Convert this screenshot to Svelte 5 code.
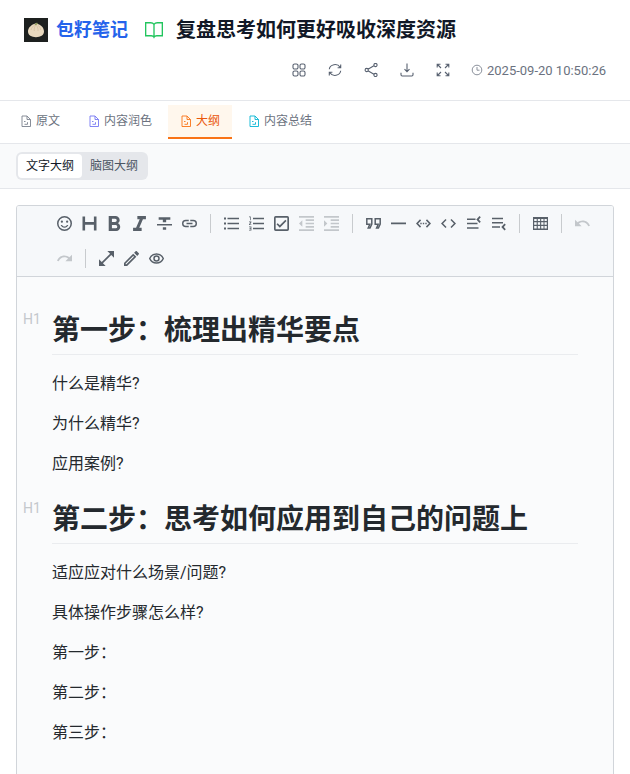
<script>
    let activeTab = 'outline';
    let activeView = 'text';

    const tabs = [
        { id: 'source', label: '原文', color: 'gray' },
        { id: 'polish', label: '内容润色', color: 'indigo' },
        { id: 'outline', label: '大纲', color: 'orange' },
        { id: 'summary', label: '内容总结', color: 'cyan' }
    ];

    const views = [
        { id: 'text', label: '文字大纲' },
        { id: 'mind', label: '脑图大纲' }
    ];

    const actions = [
        {
            name: '应用',
            path: 'M2.600 1h1.800a1.600 1.600 0 0 1 1.600 1.600v1.800a1.600 1.600 0 0 1-1.600 1.600H2.600A1.600 1.600 0 0 1 1 4.400V2.600A1.600 1.600 0 0 1 2.600 1zM9.600 1h1.800a1.600 1.600 0 0 1 1.600 1.600v1.800a1.600 1.600 0 0 1-1.600 1.600H9.600A1.600 1.600 0 0 1 8 4.400V2.600A1.600 1.600 0 0 1 9.600 1zM2.600 8h1.800A1.600 1.600 0 0 1 6 9.600v1.800A1.600 1.600 0 0 1 4.400 13H2.600A1.600 1.600 0 0 1 1 11.400V9.600A1.600 1.600 0 0 1 2.600 8zM9.600 8h1.800A1.600 1.600 0 0 1 13 9.600v1.800a1.600 1.600 0 0 1-1.600 1.600H9.600A1.600 1.600 0 0 1 8 11.400V9.600A1.600 1.600 0 0 1 9.600 8z'
        },
        {
            name: '刷新',
            path: 'M1.3 6.2a5.8 5.2 0 0 1 10.8-2M12.7 1.5v3.2H9.6M12.7 7.8a5.8 5.2 0 0 1-10.8 2M1.3 12.5V9.3h3.1'
        },
        {
            name: '分享',
            path: 'M4 6.300l5.900-3.500M4 7.700l5.900 3.500M4.300 7a1.600 1.600 0 1 1-3.200 0 1.600 1.600 0 0 1 3.200 0zM13.100 2a1.600 1.600 0 1 1-3.200 0 1.600 1.600 0 0 1 3.200 0zM13.100 12a1.600 1.600 0 1 1-3.200 0 1.600 1.600 0 0 1 3.200 0z'
        },
        {
            name: '下载',
            path: 'M7 .5v8M4.500 6.200L7 8.700l2.500-2.500M1 9.800v2q0 1.200 1.200 1.200h9.600q1.200 0 1.200-1.200v-2'
        },
        {
            name: '全屏',
            path: 'M1.200 4.500V1.200h3.300M1.500 1.500l3.500 3.500M9.500 1.200h3.300v3.300M12.500 1.500L9 5M1.200 9.500v3.300h3.300M1.500 12.500L5 9M9.500 12.800h3.300V9.500M12.500 12.500L9 9'
        }
    ];

    const tools = [
        { name: '表情', box: '2 2 20 20', path: 'M12 2a10 10 0 1 0 0 20 10 10 0 0 0 0-20zm0 18a8 8 0 1 1 0-16 8 8 0 0 1 0 16zm3.500-9a1.500 1.500 0 1 0 0-3 1.500 1.500 0 0 0 0 3zm-7 0a1.500 1.500 0 1 0 0-3 1.500 1.500 0 0 0 0 3zM12 16c-1.480 0-2.750-.81-3.450-2H6.880c.8 2.050 2.790 3.500 5.120 3.500s4.320-1.450 5.120-3.500h-1.670c-.7 1.190-1.970 2-3.450 2z' },
        { name: '标题', box: '0 0 15 15', path: 'M.5.5h2.600v5.600h8.800V.5h2.600v14h-2.600V8.700H3.100v5.800H.5z' },
        { name: '粗体', box: '5.4 4 14 14', path: 'M15.600 10.790c.97-.67 1.650-1.770 1.650-2.790 0-2.260-1.750-4-4-4H7v14h7.040c2.090 0 3.710-1.700 3.710-3.790 0-1.520-.86-2.820-2.150-3.420zM10 6.500h3a1.500 1.500 0 0 1 0 3h-3zm3.500 9H10v-3h3.500a1.500 1.500 0 0 1 0 3z' },
        { name: '斜体', box: '5 4 14 14', path: 'M10 4v3h2.210l-3.420 8H6v3h8v-3h-2.210l3.420-8H18V4z' },
        { name: '删除线', box: '3 2.5 18 18', path: 'M10 19h4v-3h-4zM5 4v3h5v3h4V7h5V4zM3 14h18v-2H3z' },
        { name: '链接', box: '2 2 20 20', path: 'M3.900 12A3.100 3.100 0 0 1 7 8.900h4V7H7a5 5 0 0 0 0 10h4v-1.900H7A3.100 3.100 0 0 1 3.900 12zM8 13h8v-2H8zm9-6h-4v1.900h4a3.100 3.100 0 0 1 0 6.200h-4V17h4a5 5 0 0 0 0-10z' },
        { divider: true },
        { name: '无序列表', box: '0 0 15 15', path: 'M0 1.500h2v2H0zM3.500 1.800H15v1.400H3.500zM0 6.500h2v2H0zM3.500 6.800H15v1.400H3.500zM0 11.500h2v2H0zM3.500 11.800H15v1.400H3.500z' },
        { name: '有序列表', box: '0 0 15 15', path: 'M0 .5h1.700v3.700H1V1.200H0zM0 5.500h2.400v.8L1 8.400h1.400v.7H0v-.7l1.400-2.200H0zM0 10.600h2.400v3.900H0v-.7h1.600v-.9H.5v-.7h1.100v-.9H0zM4 1.800h11v1.400H4zM4 6.800h11v1.400H4zM4 11.800h11v1.400H4z' },
        { name: '任务列表', box: '3 3 18 18', path: 'M19 3H5a2 2 0 0 0-2 2v14a2 2 0 0 0 2 2h14a2 2 0 0 0 2-2V5a2 2 0 0 0-2-2zm0 16H5V5h14zM17.990 9l-1.410-1.420-6.590 6.590-2.580-2.570-1.420 1.410 4 3.990z' },
        { name: '减少缩进', box: '3 3 18 18', disabled: true, path: 'M11 17h10v-2H11zM3 12l4 4V8zM3 21h18v-2H3zM3 3v2h18V3zM11 9h10V7H11zM11 13h10v-2H11z' },
        { name: '增加缩进', box: '3 3 18 18', disabled: true, path: 'M3 21h18v-2H3zM3 8v8l4-4zM11 17h10v-2H11zM3 3v2h18V3zM11 9h10V7H11zM11 13h10v-2H11z' },
        { divider: true },
        { name: '引用', box: '0 0 15 15', stroke: true, path: 'M.8 2.800h5v5.200L4 12H2.200l1.600-3.800H.8zM9.200 2.800h5v5.200L12.400 12h-1.800l1.600-3.800H9.200z' },
        { name: '分隔线', box: '0 0 15 15', path: 'M0 6.500h15v1.800H0z' },
        { name: '代码块', box: '0 0 15 15', path: 'M4 3.300l1.100 1.100-3 3.100 3 3.100L4 11.700 0 7.500zM11 3.300L9.900 4.400l3 3.100-3 3.100 1.100 1.100 4-4.200zM4.300 6.800h1.400v1.400H4.300zM6.800 6.800h1.400v1.400H6.800zM9.300 6.800h1.400v1.400H9.300z' },
        { name: '行内代码', box: '2 2 20 20', path: 'M9.400 16.600L4.800 12l4.600-4.600L8 6l-6 6 6 6zM14.600 16.600l4.600-4.600-4.600-4.600L16 6l6 6-6 6z' },
        { name: '前插入', box: '0 0 15 15', path: 'M1 2.500h8.500v1.500H1zM1 6.800h10.500v1.500H1zM1 11.200h11.500v1.500H1zM13.500 0l1.300 1.200-2 2.300 2 2.300L13.500 7l-3.200-3.500z' },
        { name: '后插入', box: '0 0 15 15', path: 'M1 1.800h11v1.500H1zM1 5.900h11v1.500H1zM1 10.200h8v1.500H1zM13.500 7.500l1.300 1.200-2 2.300 2 2.300-1.300 1.200-3.200-3.500z' },
        { divider: true },
        { name: '表格', box: '0 0 15 15', path: 'M0 1h15v13H0zM1.200 3v2.100h2.500V3zM4.800 3v2.100h2.300V3zM8.200 3v2.100h2.300V3zM11.500 3v2.100h2.300V3zM1.200 6.300v2.500h2.500V6.300zM4.800 6.300v2.500h2.300V6.300zM8.200 6.300v2.500h2.300V6.300zM11.500 6.300v2.500h2.300V6.300zM1.200 10v2.600h2.500V10zM4.800 10v2.600h2.300V10zM8.200 10v2.600h2.300V10zM11.500 10v2.600h2.300V10z' },
        { divider: true },
        { name: '撤销', box: '2 2 20.5 20.5', disabled: true, path: 'M12.500 8c-2.650 0-5.050.99-6.900 2.600L2 7v9h9l-3.620-3.620c1.390-1.160 3.160-1.880 5.120-1.880 3.540 0 6.550 2.310 7.600 5.500l2.370-.78C21.080 11.030 17.150 8 12.500 8z' },
        { name: '重做', box: '1.5 2 20.5 20.5', disabled: true, path: 'M18.400 10.600C16.550 8.990 14.150 8 11.500 8c-4.650 0-8.580 3.030-9.960 7.220L3.900 16c1.050-3.190 4.050-5.500 7.600-5.500 1.950 0 3.730.72 5.120 1.880L13 16h9V7z' },
        { divider: true },
        { name: '全屏编辑', box: '3 3 18 18', path: 'M21 11V3h-8l3.290 3.290-10 10L3 13v8h8l-3.290-3.290 10-10z' },
        { name: '编辑模式', box: '3 3 18 18', path: 'M14.060 9.020l.92.92L5.920 19H5v-.92l9.060-9.060M17.660 3c-.25 0-.51.1-.7.290l-1.830 1.830 3.750 3.750 1.830-1.830a1 1 0 0 0 0-1.410l-2.340-2.340c-.2-.2-.45-.29-.71-.29zm-3.600 3.190L3 17.250V21h3.750L17.810 9.940z' },
        { name: '预览', box: '0 0 15 15', stroke: true, path: 'M.7 7.500C2 4.500 4.500 3 7.500 3s5.500 1.500 6.800 4.500C13 10.500 10.500 12 7.500 12S2 10.500.7 7.500zM10 7.500a2.500 2.500 0 1 1-5 0 2.500 2.500 0 0 1 5 0z' }
    ];

    const sections = [
        {
            title: '第一步：梳理出精华要点',
            lines: ['什么是精华?', '为什么精华?', '应用案例?']
        },
        {
            title: '第二步：思考如何应用到自己的问题上',
            lines: ['适应应对什么场景/问题?', '具体操作步骤怎么样?', '第一步：', '第二步：', '第三步：']
        }
    ];
</script>

<div class="page">
    <header class="header">
        <div class="title-row">
            <a class="brand" href="#home">
                <svg class="logo" viewBox="0 0 24 24" aria-hidden="true">
                    <rect width="24" height="24" fill="#1d201f" />
                    <path d="M4 13.500c0-3.200 2.500-6 6-7.500l2-.8 2.500 1c3.200 1.200 5.500 4 5.500 7.300 0 3.700-3.600 5.700-8 5.700s-8-2-8-5.700z" fill="#e8d8be" />
                    <path d="M7 12c.6-2.200 2-4 4-5M11.500 7.500c-1 1.500-1.500 3.500-1.200 5.500M12.500 7.500c1.200 1.500 1.700 3.500 1.500 5.500M13.500 7c2 1.200 3 3 3.300 5" fill="none" stroke="#cfbb9a" stroke-width=".6" />
                    <path d="M10.500 6.500l2.500-2 .8 1-1.800 2z" fill="#8f9d5c" />
                </svg>
                <span>包籽笔记</span>
            </a>
            <svg class="book" viewBox="0 0 18 18" aria-hidden="true">
                <path d="M9 4Q8 2.500 6 2.500H1.500v11.700h5Q8.300 14.200 9 15.500q.7-1.300 2.500-1.300h5V2.500H12Q10 2.500 9 4zM9 4v11" />
            </svg>
            <h1 class="title">复盘思考如何更好吸收深度资源</h1>
        </div>
        <div class="meta-row">
            <div class="actions">
                {#each actions as action}
                    <button type="button" class="action" aria-label={action.name}>
                        <svg viewBox="0 0 14 14"><path d={action.path} /></svg>
                    </button>
                {/each}
            </div>
            <div class="time">
                <svg viewBox="0 0 12 12" aria-hidden="true">
                    <circle cx="6" cy="6" r="4.8" />
                    <path d="M6 3v3.200h2.500" />
                </svg>
                <time datetime="2025-09-20T10:50:26">2025-09-20 10:50:26</time>
            </div>
        </div>
    </header>

    <nav class="tabs">
        {#each tabs as tab}
            <button type="button" class="tab" class:active={activeTab === tab.id} on:click={() => (activeTab = tab.id)}>
                <svg class={tab.color} viewBox="0 0 12 12" aria-hidden="true">
                    <path d="M2 1h5l3.500 3.500v7H2zM7 1v3.500h3.500M4 6.500h1.500M4.500 9.300h3V7.200" />
                </svg>
                <span>{tab.label}</span>
            </button>
        {/each}
    </nav>

    <div class="view-bar">
        <div class="switch">
            {#each views as view}
                <button type="button" class:selected={activeView === view.id} on:click={() => (activeView = view.id)}>
                    {view.label}
                </button>
            {/each}
        </div>
    </div>

    <main class="main">
        <div class="editor">
            <div class="toolbar">
                {#each tools as tool}
                    {#if tool.divider}
                        <span class="divider"></span>
                    {:else}
                        <button type="button" class="tool" aria-label={tool.name} disabled={tool.disabled}>
                            <svg viewBox={tool.box} class:stroke={tool.stroke}>
                                <path d={tool.path} fill-rule="evenodd" />
                            </svg>
                        </button>
                    {/if}
                {/each}
            </div>
            <div class="content" contenteditable="true" role="textbox" tabindex="0" aria-multiline="true" aria-label="大纲" spellcheck="false">
                {#each sections as section}
                    <h1>{section.title}</h1>
                    {#each section.lines as line}
                        <p>{line}</p>
                    {/each}
                {/each}
            </div>
        </div>
    </main>
</div>

<style>
    :global(body) {
        margin: 0;
        background: #fff;
    }

    .page {
        display: flex;
        flex-direction: column;
        height: 100vh;
        overflow: hidden;
        font-family: Roboto, 'Noto Sans CJK SC', sans-serif;
        color: #24292e;
    }

    button {
        margin: 0;
        padding: 0;
        border: 0;
        background: none;
        font: inherit;
        color: inherit;
        cursor: pointer;
    }

    svg {
        display: block;
        flex: none;
    }

    .header {
        display: flex;
        flex-direction: column;
        gap: 12px;
        padding: 16px 24px;
        border-bottom: 1px solid #e5e7eb;
    }

    .title-row {
        display: flex;
        align-items: center;
        height: 28px;
    }

    .brand {
        display: flex;
        align-items: center;
        gap: 8px;
        margin-right: 16px;
        font-size: 18px;
        line-height: 28px;
        font-weight: 700;
        color: #2563eb;
        text-decoration: none;
    }

    .logo {
        width: 24px;
        height: 24px;
    }

    .book {
        width: 20px;
        height: 20px;
        margin-right: 12px;
        fill: none;
        stroke: #22c55e;
        stroke-width: 1.2;
    }

    .title {
        margin: 0;
        font-size: 20px;
        line-height: 30px;
        font-weight: 700;
        color: #111827;
        white-space: nowrap;
    }

    .meta-row {
        display: flex;
        align-items: center;
        justify-content: flex-end;
        gap: 16px;
        height: 28px;
    }

    .actions {
        display: flex;
        gap: 12px;
    }

    .action {
        display: flex;
        align-items: center;
        justify-content: center;
        width: 24px;
        height: 24px;
    }

    .action svg {
        width: 14px;
        height: 14px;
        fill: none;
        stroke: #586170;
        stroke-width: 1.1;
    }

    .time {
        display: flex;
        align-items: center;
        gap: 4px;
        font-size: 13px;
        color: #6b7280;
    }

    .time svg {
        width: 12px;
        height: 12px;
        fill: none;
        stroke: #8b919c;
    }

    .tabs {
        display: flex;
        gap: 4px;
        padding: 4px 8px;
        border-bottom: 1px solid #e5e7eb;
    }

    .tab {
        display: flex;
        align-items: center;
        gap: 4px;
        height: 34px;
        padding: 0 12px;
        border-bottom: 2px solid transparent;
        box-sizing: border-box;
        font-size: 12px;
        line-height: 16px;
        color: #6b7280;
    }

    .tab.active {
        border-bottom-color: #f97316;
        background: #fff7ed;
        color: #ea580c;
    }

    .tab svg {
        width: 12px;
        height: 12px;
        fill: none;
        stroke-width: 0.9;
    }

    .gray {
        stroke: #7b818d;
    }

    .indigo {
        stroke: #7577f3;
    }

    .orange {
        stroke: #f97316;
    }

    .cyan {
        stroke: #06b6d4;
    }

    .view-bar {
        display: flex;
        padding: 8px 16px;
        border-bottom: 1px solid #e5e7eb;
        background: #f9fafb;
    }

    .switch {
        display: flex;
        padding: 2px;
        border-radius: 6px;
        background: #e5e7eb;
    }

    .switch button {
        height: 24px;
        padding: 0 8px;
        border-radius: 4px;
        font-size: 12px;
        line-height: 16px;
        color: #4b5563;
    }

    .switch .selected {
        background: #fff;
        color: #111827;
    }

    .main {
        flex: 1;
        min-height: 0;
        padding: 16px 16px 0;
    }

    .editor {
        border: 1px solid #d1d5da;
        border-radius: 3px;
        overflow: hidden;
    }

    .toolbar {
        display: flex;
        flex-wrap: wrap;
        padding: 0 5px 0 35px;
        border-bottom: 1px solid #d1d5da;
        background: #f6f8fa;
    }

    .tool {
        display: flex;
        align-items: center;
        justify-content: center;
        width: 25px;
        height: 35px;
        color: #586069;
    }

    .tool:disabled {
        color: #c3c7cb;
        cursor: not-allowed;
    }

    .tool svg {
        width: 15px;
        height: 15px;
        fill: currentColor;
    }

    .tool .stroke {
        fill: none;
        stroke: currentColor;
        stroke-width: 1.5;
    }

    .divider {
        width: 1px;
        height: 19px;
        margin: 8px;
        background: #c8cbce;
    }

    .content {
        padding: 10px 35px 64px;
        background: #fafbfc;
        outline: none;
    }

    .content h1 {
        margin: 24px 0 17px;
        padding-bottom: 3px;
        border-bottom: 1px solid #eaecef;
        font-size: 28px;
        line-height: 40px;
        font-weight: 700;
    }

    .content h1::before {
        content: 'H1';
        float: left;
        width: 29px;
        margin-left: -29px;
        font-size: 14px;
        line-height: 16px;
        font-weight: 400;
        color: #c4c8cc;
    }

    .content p {
        margin: 0 0 16px;
        font-size: 16px;
        line-height: 24px;
    }
</style>
